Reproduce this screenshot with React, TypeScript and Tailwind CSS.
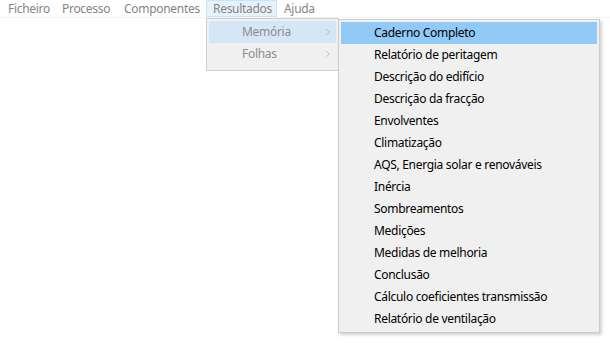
import { ChevronRight } from "lucide-react";

const bar = [
  { label: "Ficheiro", w: "w-[54px]" },
  { label: "Processo", w: "w-[62px]" },
  { label: "Componentes", w: "w-[89px]" },
  { label: "Resultados", w: "w-[71px]", open: true },
  { label: "Ajuda", w: "w-[44px]" },
];

const reports = [
  "Caderno Completo",
  "Relatório de peritagem",
  "Descrição do edifício",
  "Descrição da fracção",
  "Envolventes",
  "Climatização",
  "AQS, Energia solar e renováveis",
  "Inércia",
  "Sombreamentos",
  "Medições",
  "Medidas de melhoria",
  "Conclusão",
  "Cálculo coeficientes transmissão",
  "Relatório de ventilação",
];

export default function App() {
  return (
    <div
      className="relative w-[610px] h-[343px] bg-white text-[12px] tracking-[-0.3px] leading-none overflow-hidden"
      style={{ fontFamily: '"Segoe UI", "Noto Sans", sans-serif' }}
    >
      {/* Menu bar */}
      <div className="flex h-[18px] pl-[1px] border-b border-[#f3f3f3]">
        {bar.map((b) => (
          <div
            key={b.label}
            className={[
              "h-[17px] flex items-center pl-[6px] text-[#858585]",
              b.w,
              b.open ? "bg-[#e5f1fb] border border-[#cce4f7]" : "border border-transparent",
            ].join(" ")}
          >
            {b.label}
          </div>
        ))}
      </div>

      {/* Resultados dropdown */}
      <div className="absolute left-[206px] top-[18px] w-[133px] bg-[#f0f0f0] border border-[#d0d0d0] p-[2px] pb-[5px]">
        {["Memória", "Folhas"].map((s, i) => (
          <div
            key={s}
            className={[
              "h-[22px] flex items-center pl-[33px] pr-[3px] text-[#8d8d8d]",
              i === 0 ? "bg-[#d5e7f7]" : "",
            ].join(" ")}
          >
            <span className="flex-1">{s}</span>
            <ChevronRight className="w-[10px] h-[10px] text-[#a8a8a8]" strokeWidth={1.75} />
          </div>
        ))}
      </div>

      {/* Memória submenu */}
      <div className="absolute left-[338px] top-[19px] w-[262px] bg-[#f0f0f0] border border-[#cccccc] p-[2px] shadow-[2px_2px_3px_rgba(0,0,0,0.18)]">
        {reports.map((r, i) => (
          <div
            key={r}
            className={[
              "h-[22px] flex items-center pl-[33px] text-black",
              i === 0 ? "bg-[#91c9f7]" : "",
            ].join(" ")}
          >
            {r}
          </div>
        ))}
      </div>
    </div>
  );
}
